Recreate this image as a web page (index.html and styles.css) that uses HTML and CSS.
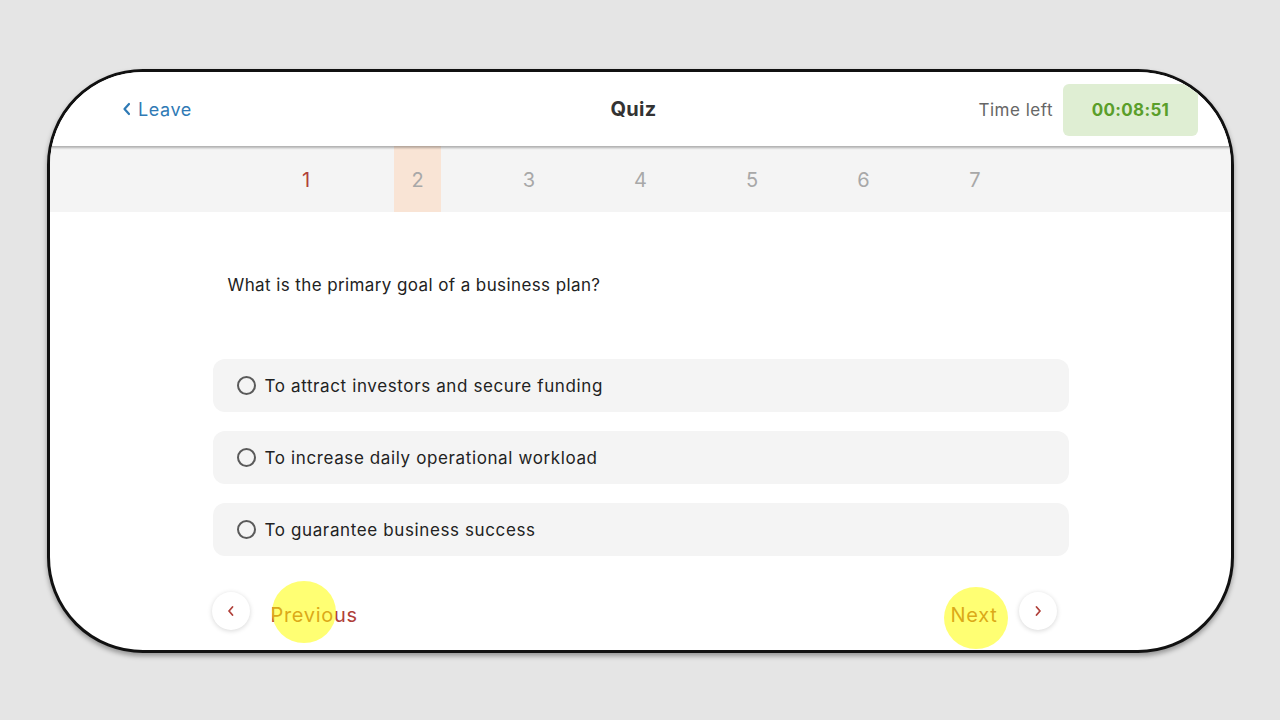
FILE: index.html
```html
<!DOCTYPE html>
<html>
<head>
<meta charset="utf-8">
<link rel="stylesheet" href="styles.css">
</head>
<body>
<div class="device">
  <header class="topbar">
    <a class="leave"><svg width="10" height="14" viewBox="0 0 10 14"><path d="M7 2 L2.5 7 L7 12" fill="none" stroke="#2f7ab5" stroke-width="2.2" stroke-linecap="round" stroke-linejoin="round"/></svg><span>Leave</span></a>
    <h1 class="title">Quiz</h1>
    <div class="timer-wrap">
      <span class="time-label">Time left</span>
      <span class="timer">00:08:51</span>
    </div>
  </header>
  <nav class="tabs">
    <span class="tab done">1</span>
    <span class="tab active">2</span>
    <span class="tab">3</span>
    <span class="tab">4</span>
    <span class="tab">5</span>
    <span class="tab">6</span>
    <span class="tab">7</span>
  </nav>
  <main class="content">
    <p class="question">What is the primary goal of a business plan?</p>
    <div class="options">
      <label class="option"><span class="radio"></span><span>To attract investors and secure funding</span></label>
      <label class="option"><span class="radio"></span><span>To increase daily operational workload</span></label>
      <label class="option"><span class="radio"></span><span>To guarantee business success</span></label>
    </div>
    <div class="nav">
      <div class="nav-item">
        <span class="circle-btn"><svg width="10" height="14" viewBox="0 0 10 14"><path d="M6.5 3 L3 7 L6.5 11" fill="none" stroke="#b0403a" stroke-width="1.8" stroke-linecap="round" stroke-linejoin="round"/></svg></span>
        <span class="nav-label">Previous<span class="tap tap-prev"></span></span>
      </div>
      <div class="nav-item">
        <span class="nav-label">Next<span class="tap tap-next"></span></span>
        <span class="circle-btn"><svg width="10" height="14" viewBox="0 0 10 14"><path d="M3.5 3 L7 7 L3.5 11" fill="none" stroke="#b0403a" stroke-width="1.8" stroke-linecap="round" stroke-linejoin="round"/></svg></span>
      </div>
    </div>
  </main>
</div>
</body>
</html>
```
FILE: styles.css
```css
* { box-sizing: border-box; }
html, body { margin: 0; padding: 0; }
body {
  background: #e5e5e5;
  font-family: "Inter", "Liberation Sans", sans-serif;
  width: 1280px;
  height: 720px;
  overflow: hidden;
}
.device {
  margin: 69px 0 0 47px;
  width: 1187px;
  height: 584px;
  border: 3px solid #111;
  border-radius: 96px;
  background: #fff;
  overflow: hidden;
  box-shadow: 0 3px 5px rgba(0,0,0,0.35);
  display: flex;
  flex-direction: column;
}
.topbar {
  height: 74px;
  flex: none;
  display: grid;
  grid-template-columns: 1fr auto 1fr;
  align-items: center;
  padding: 0 33px 0 72px;
  position: relative;
  z-index: 2;
  box-shadow: 0 2px 2px rgba(0,0,0,0.28);
  background: #fff;
}
.leave {
  display: flex;
  align-items: center;
  gap: 6px;
  color: #2f7ab5;
  font-size: 18px;
  letter-spacing: 0.6px;
}
.title {
  margin: 0 53px 0 0;
  font-size: 20px;
  font-weight: 700;
  color: #333;
  letter-spacing: 0.3px;
}
.timer-wrap {
  display: flex;
  align-items: center;
  gap: 10px;
  justify-content: flex-end;
  margin-top: 2px;
}
.time-label {
  color: #666;
  font-size: 17px;
  letter-spacing: 0.5px;
}
.timer {
  background: #dfeed3;
  color: #5a9e2a;
  font-weight: 700;
  font-size: 17px;
  letter-spacing: 0.3px;
  width: 135px;
  height: 52px;
  border-radius: 6px;
  display: flex;
  align-items: center;
  justify-content: center;
}
.tabs {
  flex: none;
  height: 66px;
  background: #f4f4f4;
  display: flex;
  justify-content: center;
  gap: 64.5px;
}
.tab {
  width: 47px;
  display: flex;
  align-items: center;
  justify-content: center;
  font-size: 20px;
  color: #a8a8a8;
  padding-top: 2px;
}
.tab.done { color: #b0403a; }
.tab.active { background: #f9e4d5; }
.content {
  width: 856px;
  margin: 0 auto;
  padding-top: 62px;
}
.question {
  margin: 0 0 63px 15px;
  font-size: 17px;
  letter-spacing: 0.4px;
  color: #222;
  line-height: 22px;
}
.options {
  display: flex;
  flex-direction: column;
  gap: 19px;
}
.option {
  height: 53px;
  background: #f4f4f4;
  border-radius: 12px;
  display: flex;
  align-items: center;
  padding-left: 24px;
  gap: 9px;
  font-size: 17px;
  color: #222;
  letter-spacing: 0.62px;
}
.radio {
  width: 19px;
  height: 19px;
  border: 2px solid #5a5a5a;
  border-radius: 50%;
  flex: none;
}
.nav {
  display: flex;
  justify-content: space-between;
  align-items: center;
  margin-top: 36px;
  padding-right: 12px;
  margin-left: -1px;
}
.nav-item {
  display: flex;
  align-items: center;
  gap: 21px;
}
.circle-btn {
  width: 38px;
  height: 38px;
  border-radius: 50%;
  background: #fff;
  box-shadow: 0 1px 5px rgba(0,0,0,0.16);
  display: flex;
  align-items: center;
  justify-content: center;
}
.nav-label {
  position: relative;
  color: #b0403a;
  font-size: 20px;
  letter-spacing: 0.7px;
  margin-top: 8px;
}
.tap {
  position: absolute;
  width: 64px;
  height: 62px;
  border-radius: 50%;
  background: rgba(255, 255, 0, 0.55);
}
.tap-prev { left: 1px; top: -22px; }
.tap-next { left: -7px; top: -16px; }
```
